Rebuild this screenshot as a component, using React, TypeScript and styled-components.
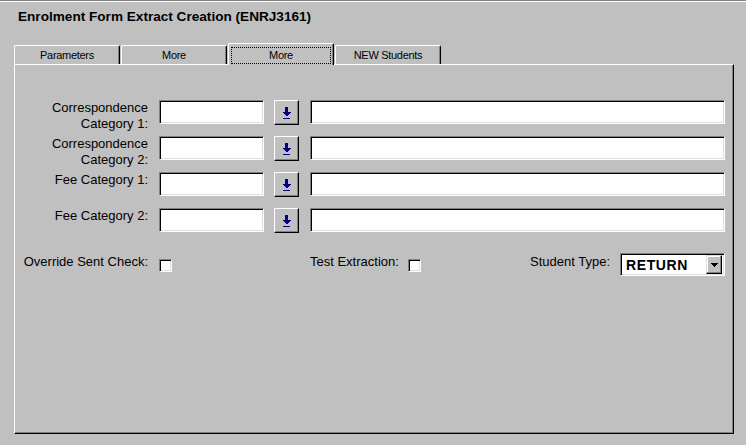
import React from "react";
import styled, { createGlobalStyle } from "styled-components";

const GlobalStyle = createGlobalStyle`
  html, body { margin: 0; padding: 0; background: #c0c0c0; }
  body { font-family: "Liberation Sans", Arial, sans-serif; color: #000; }
`;

const COLUMNS = "134px 105px 26px 1fr";

const Window = styled.div`
  width: 746px;
  height: 445px;
  box-sizing: border-box;
  background: #c0c0c0;
  border-top: 1px solid #808080;
  box-shadow: inset 0 1px 0 #ffffff;
  overflow: hidden;
`;

const Title = styled.h1`
  margin: 0;
  padding: 8px 0 0 18px;
  font-size: 13.6px;
  line-height: 16px;
  font-weight: bold;
`;

const TabArea = styled.div`
  margin: 18px 0 0 14px;
  width: 720px;
`;

const TabStrip = styled.div`
  display: flex;
  align-items: flex-end;
  gap: 1px;
  height: 21px;
`;

const Tab = styled.div<{ $active?: boolean }>`
  box-sizing: border-box;
  width: 106px;
  height: ${(p) => (p.$active ? "22px" : "19px")};
  margin-bottom: ${(p) => (p.$active ? "-1px" : "0")};
  position: relative;
  z-index: ${(p) => (p.$active ? 1 : 0)};
  background: #c0c0c0;
  border-top: 1px solid #ffffff;
  border-left: 1px solid #ffffff;
  border-right: 1px solid #000000;
  border-radius: 2px 2px 0 0;
  box-shadow: inset -1px 0 0 #808080;
  display: flex;
  align-items: stretch;
  font-size: 11px;
  letter-spacing: -0.3px;
  line-height: 13px;
`;

const TabLabel = styled.span<{ $focus?: boolean }>`
  flex: 1;
  display: flex;
  align-items: center;
  justify-content: center;
  margin: ${(p) => (p.$focus ? "3px 2px 1px 2px" : "0")};
  border: ${(p) => (p.$focus ? "1px dotted #000" : "none")};
`;

const Panel = styled.div`
  box-sizing: border-box;
  width: 720px;
  height: 370px;
  border-top: 1px solid #ffffff;
  border-left: 1px solid #ffffff;
  border-right: 1px solid #000000;
  border-bottom: 1px solid #000000;
  box-shadow: inset -1px -1px 0 #808080;
  padding: 35px 8px 0 0;
`;

const FormGrid = styled.div`
  display: grid;
  grid-template-columns: ${COLUMNS};
  grid-auto-rows: 24px;
  column-gap: 10px;
  row-gap: 12px;
`;

const FieldLabel = styled.label`
  align-self: start;
  text-align: right;
  font-size: 13px;
  line-height: 16px;
  white-space: nowrap;
  padding-right: 1px;
`;

const SunkenBox = styled.div`
  box-sizing: border-box;
  background: #ffffff;
  border: 1px solid;
  border-color: #808080 #ffffff #ffffff #808080;
  box-shadow: inset 1px 1px 0 #000000, inset -1px -1px 0 #dfdfdf;
`;

const TextBox = styled(SunkenBox)`
  height: 24px;
`;

const LookupButton = styled.button`
  box-sizing: border-box;
  justify-self: start;
  width: 25px;
  height: 25px;
  padding: 0;
  margin: 0;
  background: #c0c0c0;
  border: 1px solid;
  border-color: #ffffff #000000 #000000 #ffffff;
  box-shadow: inset -1px -1px 0 #808080;
  display: flex;
  align-items: center;
  justify-content: center;
`;

const OptionsGrid = styled.div`
  display: grid;
  grid-template-columns: ${COLUMNS};
  column-gap: 10px;
  margin-top: 21px;
  height: 22px;
  align-items: center;
`;

const OptionLabel = styled.span<{ $right?: boolean }>`
  font-size: 13px;
  line-height: 16px;
  white-space: nowrap;
  margin-top: -5px;
  text-align: ${(p) => (p.$right ? "right" : "left")};
  padding-right: ${(p) => (p.$right ? "1px" : "0")};
`;

const OptionsRight = styled.div`
  grid-column: 4;
  display: flex;
  align-items: center;
`;

const OptionGroup = styled.div<{ $gap: number }>`
  display: flex;
  align-items: center;
  gap: ${(p) => p.$gap}px;
`;

const CheckBox = styled(SunkenBox)`
  width: 13px;
  height: 13px;
  margin-top: 1px;
`;

const Spacer = styled.div`
  flex: 1;
`;

const SelectBox = styled(SunkenBox)`
  width: 105px;
  height: 23px;
  display: flex;
  align-items: center;
  padding: 2px 2px 2px 5px;
`;

const SelectValue = styled.span`
  flex: 1;
  font-size: 14px;
  font-weight: bold;
  letter-spacing: 0.6px;
  line-height: 16px;
  padding-top: 1px;
`;

const DropButton = styled.span`
  box-sizing: border-box;
  width: 16px;
  height: 19px;
  background: #c0c0c0;
  border: 1px solid;
  border-color: #dfdfdf #000000 #000000 #dfdfdf;
  box-shadow: inset -1px -1px 0 #808080, inset 1px 1px 0 #ffffff;
  display: flex;
  align-items: center;
  justify-content: center;
`;

const DownArrowIcon = () => (
  <svg width="9" height="12" viewBox="0 0 9 12" shapeRendering="crispEdges">
    <rect x="3" y="0" width="3" height="5" fill="#000080" />
    <polygon points="0,5 9,5 4.5,9.5" fill="#000080" />
    <rect x="1" y="11" width="7" height="1" fill="#000080" />
  </svg>
);

const ComboArrow = () => (
  <svg width="7" height="4" viewBox="0 0 7 4" shapeRendering="crispEdges">
    <polygon points="0,0 7,0 3.5,4" fill="#000" />
  </svg>
);

const fields: { label: React.ReactNode }[] = [
  { label: <>Correspondence<br />Category 1:</> },
  { label: <>Correspondence<br />Category 2:</> },
  { label: <>Fee Category 1:</> },
  { label: <>Fee Category 2:</> },
];

const tabs = ["Parameters", "More", "More", "NEW Students"];
const activeTab = 2;

export default function App() {
  return (
    <>
      <GlobalStyle />
      <Window>
        <Title>Enrolment Form Extract Creation (ENRJ3161)</Title>
        <TabArea>
          <TabStrip>
            {tabs.map((t, i) => (
              <Tab key={i} $active={i === activeTab}>
                <TabLabel $focus={i === activeTab}>{t}</TabLabel>
              </Tab>
            ))}
          </TabStrip>
          <Panel>
            <FormGrid>
              {fields.map((f, i) => (
                <React.Fragment key={i}>
                  <FieldLabel>{f.label}</FieldLabel>
                  <TextBox />
                  <LookupButton>
                    <DownArrowIcon />
                  </LookupButton>
                  <TextBox />
                </React.Fragment>
              ))}
            </FormGrid>
            <OptionsGrid>
              <OptionLabel $right>Override Sent Check:</OptionLabel>
              <CheckBox />
              <span />
              <OptionsRight>
                <OptionGroup $gap={9}>
                  <OptionLabel>Test Extraction:</OptionLabel>
                  <CheckBox />
                </OptionGroup>
                <Spacer />
                <OptionGroup $gap={10}>
                  <OptionLabel>Student Type:</OptionLabel>
                  <SelectBox>
                    <SelectValue>RETURN</SelectValue>
                    <DropButton>
                      <ComboArrow />
                    </DropButton>
                  </SelectBox>
                </OptionGroup>
              </OptionsRight>
            </OptionsGrid>
          </Panel>
        </TabArea>
      </Window>
    </>
  );
}
